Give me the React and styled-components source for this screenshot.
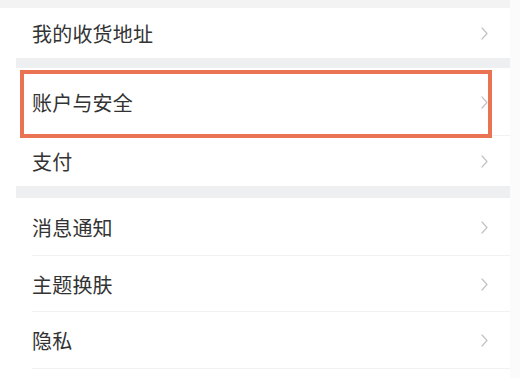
import React from "react";
import styled, { createGlobalStyle } from "styled-components";

const GlobalStyle = createGlobalStyle`
  body {
    margin: 0;
    background: #ffffff;
    font-family: "Noto Sans CJK SC", "Noto Sans", sans-serif;
  }
`;

const Page = styled.div`
  position: relative;
  width: 520px;
  height: 378px;
  overflow: hidden;
  background: #fbfbfb;
`;

const Panel = styled.div`
  width: 510px;
  height: 100%;
  background: #ffffff;
  display: flex;
  flex-direction: column;
`;

const TopStrip = styled.div`
  height: 8px;
  background: #f3f3f4;
`;

const List = styled.div`
  margin-left: 16px;
  display: flex;
  flex-direction: column;
`;

const Gap = styled.div`
  height: ${({ $h }) => $h}px;
  background: #eeeff0;
`;

const Row = styled.div`
  height: ${({ $h }) => $h}px;
  display: flex;
  align-items: center;
  justify-content: space-between;
  padding: 0 22px 0 16px;
  box-sizing: border-box;
  position: relative;

  &::after {
    content: "";
    display: ${({ $line }) => ($line ? "block" : "none")};
    position: absolute;
    left: 16px;
    right: 0;
    bottom: 0;
    height: 1px;
    background: #f1f1f1;
  }
`;

const Label = styled.span`
  font-size: 20px;
  color: #333333;
  letter-spacing: 0.2px;
`;

const Highlight = styled.div`
  position: absolute;
  left: 20px;
  top: 70px;
  width: 472px;
  height: 68px;
  box-sizing: border-box;
  border: 4px solid #ea7354;
  pointer-events: none;
`;

const Chevron = () => (
  <svg width="7" height="13" viewBox="0 0 7 13">
    <polyline
      points="1,1 6,6.5 1,12"
      fill="none"
      stroke="#c3c3c3"
      strokeWidth="1.2"
      strokeLinejoin="round"
      strokeLinecap="round"
    />
  </svg>
);

const Item = ({ label, h, line }) => (
  <Row $h={h} $line={line}>
    <Label>{label}</Label>
    <Chevron />
  </Row>
);

const App = () => {
  return (
    <>
      <GlobalStyle />
      <Page>
        <Panel>
          <TopStrip />
          <List>
            <Item label="我的收货地址" h={50} />
            <Gap $h={10} />
            <Item label="账户与安全" h={68} line />
            <Item label="支付" h={50} />
            <Gap $h={12} />
            <Item label="消息通知" h={58} line />
            <Item label="主题换肤" h={56} line />
            <Item label="隐私" h={57} line />
          </List>
        </Panel>
        <Highlight />
      </Page>
    </>
  );
};

export default App;
